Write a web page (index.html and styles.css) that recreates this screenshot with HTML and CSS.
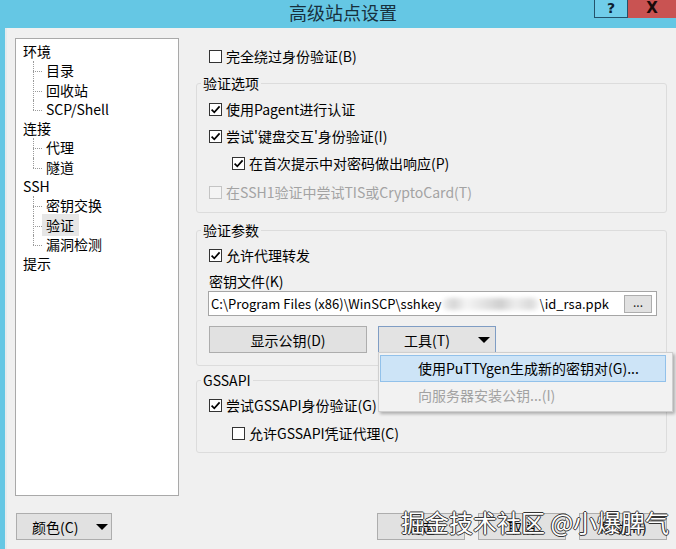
FILE: index.html
```html
<!DOCTYPE html>
<html lang="zh-CN">
<head>
<meta charset="utf-8">
<title>高级站点设置</title>
<link rel="stylesheet" href="styles.css">
</head>
<body>
<div class="window">
  <div class="titlebar">
    <span class="title">高级站点设置</span>
    <div class="caption">
      <span class="cap-help">?</span>
      <span class="cap-close">X</span>
    </div>
  </div>
  <div class="client">
    <div class="main">
      <div class="tree">
        <div class="node root">环境</div>
        <div class="children">
          <div class="node child"><span class="lbl">目录</span></div>
          <div class="node child"><span class="lbl">回收站</span></div>
          <div class="node child"><span class="lbl">SCP/Shell</span></div>
        </div>
        <div class="node root">连接</div>
        <div class="children">
          <div class="node child"><span class="lbl">代理</span></div>
          <div class="node child"><span class="lbl">隧道</span></div>
        </div>
        <div class="node root">SSH</div>
        <div class="children">
          <div class="node child"><span class="lbl">密钥交换</span></div>
          <div class="node child"><span class="lbl selected">验证</span></div>
          <div class="node child"><span class="lbl">漏洞检测</span></div>
        </div>
        <div class="node root">提示</div>
      </div>

      <div class="panel">
        <label class="check top-check"><span class="box"></span><span class="txt">完全绕过身份验证(<u>B</u>)</span></label>

        <fieldset class="group group-opts">
          <legend>验证选项</legend>
          <label class="check"><span class="box on"><svg viewBox="0 0 11 11"><path d="M1.6 5.6 L4.3 8.3 L9.6 2.4"/></svg></span><span class="txt">使用Pagent进行认证</span></label>
          <label class="check"><span class="box on"><svg viewBox="0 0 11 11"><path d="M1.6 5.6 L4.3 8.3 L9.6 2.4"/></svg></span><span class="txt">尝试'键盘交互'身份验证(<u>I</u>)</span></label>
          <label class="check indent"><span class="box on"><svg viewBox="0 0 11 11"><path d="M1.6 5.6 L4.3 8.3 L9.6 2.4"/></svg></span><span class="txt">在首次提示中对密码做出响应(<u>P</u>)</span></label>
          <label class="check disabled last"><span class="box"></span><span class="txt">在SSH1验证中尝试TIS或CryptoCard(<u>T</u>)</span></label>
        </fieldset>

        <fieldset class="group group-params">
          <legend>验证参数</legend>
          <label class="check"><span class="box on"><svg viewBox="0 0 11 11"><path d="M1.6 5.6 L4.3 8.3 L9.6 2.4"/></svg></span><span class="txt">允许代理转发</span></label>
          <div class="field-label">密钥文件(<u>K</u>)</div>
          <div class="input">
            <span class="path">C:\Program Files (x86)\WinSCP\sshkey</span><span class="blur"></span><span class="path">\id_rsa.ppk</span>
            <span class="browse">...</span>
          </div>
          <div class="btn-row">
            <span class="btn show-key"><span>显示公钥(<u>D</u>)</span></span>
            <div class="tools-wrap">
              <span class="btn tools"><span>工具(<u>T</u>)</span><span class="tri"></span></span>
              <div class="menu">
                <div class="menu-item hot">使用PuTTYgen生成新的密钥对(<u>G</u>)...</div>
                <div class="menu-item dis">向服务器安装公钥...(<u>I</u>)</div>
              </div>
            </div>
          </div>
        </fieldset>

        <fieldset class="group group-gss">
          <legend>GSSAPI</legend>
          <label class="check"><span class="box on"><svg viewBox="0 0 11 11"><path d="M1.6 5.6 L4.3 8.3 L9.6 2.4"/></svg></span><span class="txt">尝试GSSAPI身份验证(<u>G</u>)</span></label>
          <label class="check indent second"><span class="box"></span><span class="txt">允许GSSAPI凭证代理(<u>C</u>)</span></label>
        </fieldset>
      </div>
    </div>

    <div class="footer">
      <span class="btn color-btn"><span>颜色(<u>C</u>)</span><span class="tri"></span></span>
      <div class="actions">
        <span class="btn act"><span>确定</span></span>
        <span class="btn act"><span>取消</span></span>
        <span class="btn act"><span>帮助(<u>H</u>)</span></span>
      </div>
    </div>
  </div>
  <div class="watermark">掘金技术社区 @小爆脾气</div>
</div>
</body>
</html>
```

FILE: styles.css
```css
* { box-sizing: border-box; }
html, body { margin: 0; padding: 0; }
body {
  background: #65c7e4;
  font-family: "Noto Sans CJK SC", "Noto Sans", sans-serif;
  font-size: 14px;
  color: #000;
  overflow: hidden;
}
u { text-decoration: none; }

.window {
  position: relative;
  width: 676px;
  height: 549px;
  display: flex;
  flex-direction: column;
}

/* title bar */
.titlebar {
  height: 28px;
  flex: none;
  display: flex;
  align-items: flex-start;
}
.title {
  margin-left: 289px;
  font-size: 18px;
  line-height: 24px;
  color: #17303d;
}
.caption { margin-left: auto; display: flex; }
.cap-help {
  width: 34px;
  height: 18px;
  border: 1px solid #24526b;
  border-top: none;
  background: #70cdea;
  color: #0d2030;
  font: bold 14px/16px "DejaVu Sans", sans-serif;
  text-align: center;
}
.cap-close {
  width: 48px;
  height: 18px;
  background: #c95352;
  color: #1a0a0a;
  font: bold 15px/17px "DejaVu Sans", sans-serif;
  text-align: center;
}

/* client area */
.client {
  flex: 1;
  margin-left: 5px;
  border-left: 2px solid #e4ebee;
  background: #f0f0f0;
  display: flex;
  flex-direction: column;
}
.main {
  display: flex;
  padding: 10px 0 0 8px;
}

/* tree */
.tree {
  width: 164px;
  height: 458px;
  flex: none;
  border: 1px solid #a9a9a9;
  background: #fff;
  padding: 3px 0 0 7px;
  line-height: 19.3px;
}
.node { height: 19.3px; white-space: nowrap; }
.children { margin-left: 10px; }
.child { position: relative; padding-left: 9px; }
.child::before {
  content: "";
  position: absolute;
  left: 0;
  top: 10px;
  width: 9px;
  border-top: 1px dotted #9a9a9a;
}
.child::after {
  content: "";
  position: absolute;
  left: 0;
  top: 0;
  bottom: 0;
  border-left: 1px dotted #9a9a9a;
}
.child:last-child::after { bottom: 9px; }
.lbl { padding: 1px 5px 1px 4px; }
.lbl.selected { background: #e6e6e6; }

/* right panel */
.panel {
  width: 471px;
  margin-left: 17px;
  flex: none;
}
.check {
  display: flex;
  align-items: center;
  height: 18px;
  gap: 4px;
  white-space: nowrap;
}
.top-check { margin: 9px 0 0 13px; }
.box {
  width: 13px;
  height: 13px;
  flex: none;
  border: 1px solid #333;
  background: #fff;
  display: flex;
}
.box svg { width: 11px; height: 11px; }
.box svg path { fill: none; stroke: #000; stroke-width: 1.7; }
.check.disabled { color: #a3a3a3; }
.check.disabled .box { border-color: #c4c4c4; background: #f4f4f4; }

.group {
  margin: 0;
  min-width: 0;
  border: 1px solid #dcdcdc;
  border-radius: 3px;
  padding: 8px 8px 11px 12px;
}
.group legend {
  font-size: 14px;
  line-height: 18px;
  padding: 0 2px;
  margin-left: -8px;
}
.group .check + .check { margin-top: 9px; }
.group .check.last { margin-top: 11px; }
.check.indent { margin-left: 23px; }

.group-opts { margin-top: 9px; }
.group-params { margin-top: 8px; padding-top: 7px; padding-bottom: 12px; }
.group-gss { margin-top: 5px; padding-top: 7px; padding-bottom: 10px; }
.group-gss .check.second { margin-top: 10px; }

.field-label { margin-top: 8px; height: 18px; line-height: 18px; }
.input {
  margin-top: 1px;
  margin-left: -1px;
  width: 449px;
  height: 25px;
  border: 1px solid #a5a5a5;
  background: #fff;
  display: flex;
  align-items: center;
  padding-left: 2px;
  font-size: 13px;
  white-space: nowrap;
}
.path { line-height: 18px; }
.blur {
  width: 98px;
  height: 12px;
  border-radius: 6px;
  background: linear-gradient(90deg, #f2f2f2 0%, #d6d6d6 12%, #f4f4f4 25%, #e0e0e0 45%, #cfcfcf 60%, #ededed 75%, #dadada 90%, #f5f5f5 100%);
  filter: blur(2px);
}
.browse {
  margin-left: auto;
  margin-right: 4px;
  width: 28px;
  height: 18px;
  border: 1px solid #adadad;
  background: #e1e1e1;
  font-size: 12px;
  line-height: 12px;
  text-align: center;
  color: #222;
}

.btn-row { display: flex; gap: 11px; margin-top: 10px; }
.btn {
  height: 27px;
  border: 1px solid #adadad;
  background: #e1e1e1;
  display: flex;
  align-items: center;
  justify-content: center;
  white-space: nowrap;
}
.show-key { width: 158px; }
.tools-wrap { position: relative; }
.tools {
  width: 118px;
  border-color: #7f9dc4;
  background: #e3e3e3;
  justify-content: space-between;
  padding: 0 5px 0 25px;
}
.tri {
  width: 0;
  height: 0;
  border-left: 6px solid transparent;
  border-right: 6px solid transparent;
  border-top: 6px solid #000;
}

.menu {
  position: absolute;
  left: 0;
  top: 26px;
  width: 295px;
  height: 60px;
  background: #f2f2f2;
  border: 1px solid #cfcfcf;
  box-shadow: 2px 2px 3px rgba(0, 0, 0, 0.28);
  padding: 2px 6px 0 1px;
  z-index: 2;
}
.menu-item {
  height: 27px;
  line-height: 25px;
  padding-left: 37px;
  border: 1px solid transparent;
  white-space: nowrap;
}
.menu-item.hot { background: #cde4f7; border-color: #92c1ea; }
.menu-item.dis { color: #a2a2a2; }

/* footer */
.footer {
  display: flex;
  padding: 17px 9px 0 9px;
}
.color-btn {
  width: 96px;
  justify-content: space-between;
  padding: 0 3px 0 15px;
}
.actions { margin-left: auto; display: flex; gap: 13px; }
.act { width: 88px; }

/* watermark overlay */
.watermark {
  position: absolute;
  left: 401px;
  top: 507px;
  font-size: 24px;
  line-height: 30px;
  color: #fff;
  white-space: nowrap;
  text-shadow: -1px 0 #333, 1px 0 #333, 0 -1px #333, 0 1px #333;
  z-index: 3;
}
```
